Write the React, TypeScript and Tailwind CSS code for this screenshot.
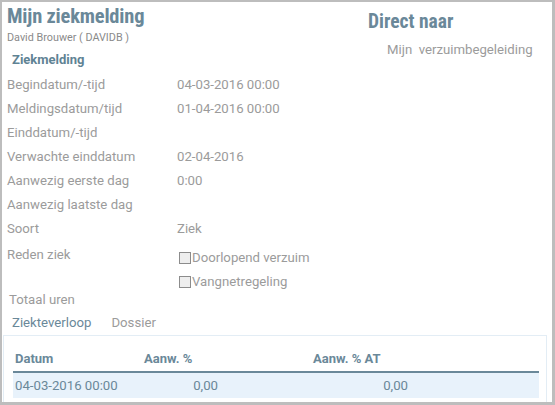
import React from "react";

const rows: [string, string][] = [
  ["Begindatum/-tijd", "04-03-2016 00:00"],
  ["Meldingsdatum/tijd", "01-04-2016 00:00"],
  ["Einddatum/-tijd", ""],
  ["Verwachte einddatum", "02-04-2016"],
  ["Aanwezig eerste dag", "0:00"],
  ["Aanwezig laatste dag", ""],
  ["Soort", "Ziek"],
];

function Box() {
  return <span className="inline-block w-[12px] h-[12px] border border-[#8c8c8c] bg-[#eeeeee] mr-[1px]" />;
}

export default function App() {
  const cond = { fontFamily: '"Roboto Condensed", "Liberation Sans Narrow", "Arial Narrow", Roboto, sans-serif' };
  return (
    <div
      className="w-[555px] h-[405px] bg-white border-l-2 border-t-2 border-r-[3px] border-b-[3px] border-[#bdbdbd] overflow-hidden text-[#9b9b9b] text-[13.2px]"
      style={{ fontFamily: 'Roboto, "Noto Sans", sans-serif' }}
    >
      <div className="flex">
        <div className="w-[360px] pl-[5px]">
          <div className="h-[28px] flex items-center text-[20.5px] font-bold text-[#6a8899] tracking-[-0.2px]" style={cond}>
            Mijn ziekmelding
          </div>
          <div className="h-[16px] flex items-center text-[10.8px] text-[#8a8a8a]">David Brouwer ( DAVIDB )</div>
          <div className="h-[27px] flex items-center pl-[5px] pt-[1px] text-[13px] font-bold text-[#5f8394]">Ziekmelding</div>
          {rows.map(([l, v]) => (
            <div key={l} className="h-[24px] flex items-center">
              <div className="w-[170px]">{l}</div>
              <div>{v}</div>
            </div>
          ))}
          <div className="flex h-[48px]">
            <div className="w-[170px] pt-[4px]">Reden ziek</div>
            <div className="pt-[10px] flex flex-col gap-[10px]">
              <div className="flex items-center h-[14px] pl-[2px]"><Box />Doorlopend verzuim</div>
              <div className="flex items-center h-[14px] pl-[2px]"><Box />Vangnetregeling</div>
            </div>
          </div>
          <div className="h-[22px] flex items-center pl-[2px]">Totaal uren</div>
          <div className="h-[24px] flex items-center gap-[20px] pl-[5px]">
            <span className="text-[#6a8899]">Ziekteverloop</span>
            <span>Dossier</span>
          </div>
        </div>
        <div className="flex-1">
          <div className="h-[36px] flex items-center pl-[6px] pt-[4px] text-[19.5px] font-bold text-[#6a8899]" style={cond}>
            Direct naar
          </div>
          <div className="h-[24px] flex items-center pl-[25px] whitespace-pre">Mijn  verzuimbegeleiding</div>
        </div>
      </div>
      <div className="ml-[1px] mr-[5px] border border-[#e3edf5] border-b-0 h-[80px] pt-[10px] pl-[9px] pr-[7px]">
        <div className="flex h-[27px] items-center font-bold text-[13px] text-[#6a8899] border-b-2 border-[#6a8899] px-[2px]">
          <div className="w-[129px]">Datum</div>
          <div className="w-[169px]">Aanw. %</div>
          <div>Aanw. % AT</div>
        </div>
        <div className="flex h-[25px] items-center bg-[#e8f2fb] text-[#6a8899] px-[2px]">
          <div className="w-[129px]">04-03-2016 00:00</div>
          <div className="w-[74px] text-right">0,00</div>
          <div className="w-[190px] text-right">0,00</div>
        </div>
      </div>
    </div>
  );
}
